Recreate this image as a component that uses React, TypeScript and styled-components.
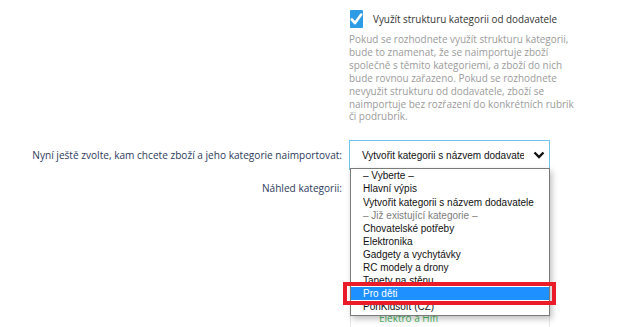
import React, { FC } from "react";
import styled, { createGlobalStyle } from "styled-components";

const GlobalStyle = createGlobalStyle`
  html, body {
    margin: 0;
    padding: 0;
    background: #ffffff;
  }
  body {
    font-family: "Open Sans", "Noto Sans", sans-serif;
  }
`;

const Page = styled.div`
  width: 636px;
  height: 327px;
  overflow: hidden;
  padding-top: 10px;
  box-sizing: border-box;
`;

const FormRow = styled.div<{ top?: number; center?: boolean }>`
  display: grid;
  grid-template-columns: 342px 201px;
  column-gap: 7px;
  align-items: ${({ center }) => (center ? "center" : "start")};
  margin-top: ${({ top }) => (top ? `${top}px` : "0")};
`;

const Label = styled.div<{ offset?: number }>`
  text-align: right;
  font-size: 10.1px;
  color: #2d3b5c;
  white-space: nowrap;
  padding-top: ${({ offset }) => offset ?? 0}px;
`;

const Control = styled.div`
  position: relative;
`;

const CheckRow = styled.label`
  display: flex;
  align-items: center;
  gap: 10px;
  font-size: 9.9px;
  color: #333333;
  white-space: nowrap;
`;

const CheckBox = styled.span`
  display: inline-flex;
  align-items: center;
  justify-content: center;
  width: 18px;
  height: 18px;
  margin-left: 1px;
  background: #2e9be6;
  border-radius: 1px;
`;

const Hint = styled.p`
  margin: 5px 0 0;
  font-size: 9.95px;
  line-height: 12.9px;
  color: #9b9b9b;
  white-space: nowrap;
`;

const SelectBox = styled.div`
  display: flex;
  align-items: center;
  height: 30px;
  box-sizing: border-box;
  border: 1px solid #73c2ee;
  padding: 0 4px 0 12px;
  font-family: "Liberation Sans", Arial, sans-serif;
  font-size: 10px;
  color: #111111;
  background: #ffffff;
`;

const SelectValue = styled.span`
  width: 162px;
  flex-shrink: 0;
  overflow: hidden;
  white-space: nowrap;
`;

const Chevron = styled.svg`
  width: 12px;
  height: 8px;
  margin-left: 9px;
  flex-shrink: 0;
`;

const Menu = styled.ul`
  position: absolute;
  left: 1px;
  top: 28px;
  width: 200px;
  margin: 0;
  padding: 0 0 2px;
  list-style: none;
  box-sizing: border-box;
  border: 1px solid #7a7a7a;
  background: #ffffff;
  box-shadow: 2px 3px 6px rgba(0, 0, 0, 0.25);
  font-family: "Liberation Sans", Arial, sans-serif;
  font-size: 10px;
  z-index: 5;
`;

const MenuItem = styled.li<{ muted?: boolean; active?: boolean }>`
  height: 13.1px;
  line-height: 13.1px;
  padding-left: 12px;
  white-space: nowrap;
  color: ${({ muted, active }) =>
    active ? "#ffffff" : muted ? "#7d7d7d" : "#111111"};
  background: ${({ active }) => (active ? "#1e90ff" : "transparent")};
`;

const Marker = styled.div`
  position: absolute;
  left: -6px;
  top: 142px;
  width: 213px;
  height: 23px;
  box-sizing: border-box;
  border: 4px solid #ea1c2a;
  z-index: 6;
`;

const Preview = styled.div`
  height: 160px;
  border-left: 1px solid #e6e6e6;
  border-right: 1px solid #e6e6e6;
  margin-left: 1px;
  padding-top: 135px;
  box-sizing: border-box;
`;

const PreviewItem = styled.div<{ indent?: number }>`
  font-size: 10px;
  line-height: 14px;
  color: #4cb862;
  padding-left: ${({ indent }) => indent ?? 0}px;
`;

const options: { text: string; muted?: boolean; active?: boolean }[] = [
  { text: "– Vyberte –" },
  { text: "Hlavní výpis" },
  { text: "Vytvořit kategorii s názvem dodavatele" },
  { text: "– Již existující kategorie –", muted: true },
  { text: "Chovatelské potřeby" },
  { text: "Elektronika" },
  { text: "Gadgety a vychytávky" },
  { text: "RC modely a drony" },
  { text: "Tapety na stěnu" },
  { text: "Pro děti", active: true },
  { text: "PohKidsoft (CZ)" },
];

const App: FC = () => {
  return (
    <>
      <GlobalStyle />
      <Page>
        <FormRow>
          <div />
          <Control>
            <CheckRow>
              <CheckBox>
                <svg width="13" height="12" viewBox="0 0 13 12">
                  <polyline
                    points="1.8 6.5 5 10 11.2 1.6"
                    fill="none"
                    stroke="#ffffff"
                    strokeWidth="2.6"
                    strokeLinecap="round"
                    strokeLinejoin="round"
                  />
                </svg>
              </CheckBox>
              Využít strukturu kategorii od dodavatele
            </CheckRow>
            <Hint>
              Pokud se rozhodnete využít strukturu kategorii,
              <br />
              bude to znamenat, že se naimportuje zboží
              <br />
              společně s těmito kategoriemi, a zboží do nich
              <br />
              bude rovnou zařazeno. Pokud se rozhodnete
              <br />
              nevyužit strukturu od dodavatele, zboží se
              <br />
              naimportuje bez rozřazení do konkrétních rubrik
              <br />
              či podrubrik.
            </Hint>
          </Control>
        </FormRow>

        <FormRow top={17} center>
          <Label>
            Nyní ještě zvolte, kam chcete zboží a jeho kategorie naimportovat:
          </Label>
          <Control>
            <SelectBox>
              <SelectValue>Vytvořit kategorii s názvem dodavatele</SelectValue>
              <Chevron viewBox="0 0 12 8">
                <polyline
                  points="1.5 1.5 6 6 10.5 1.5"
                  fill="none"
                  stroke="#111111"
                  strokeWidth="2.4"
                />
              </Chevron>
            </SelectBox>
            <Menu>
              {options.map((o) => (
                <MenuItem key={o.text} muted={o.muted} active={o.active}>
                  {o.text}
                </MenuItem>
              ))}
            </Menu>
            <Marker />
          </Control>
        </FormRow>

        <FormRow top={6}>
          <Label offset={5}>Náhled kategorii:</Label>
          <Preview>
            <PreviewItem indent={28}>Elektro a Hifi</PreviewItem>
          </Preview>
        </FormRow>
      </Page>
    </>
  );
};

export default App;
